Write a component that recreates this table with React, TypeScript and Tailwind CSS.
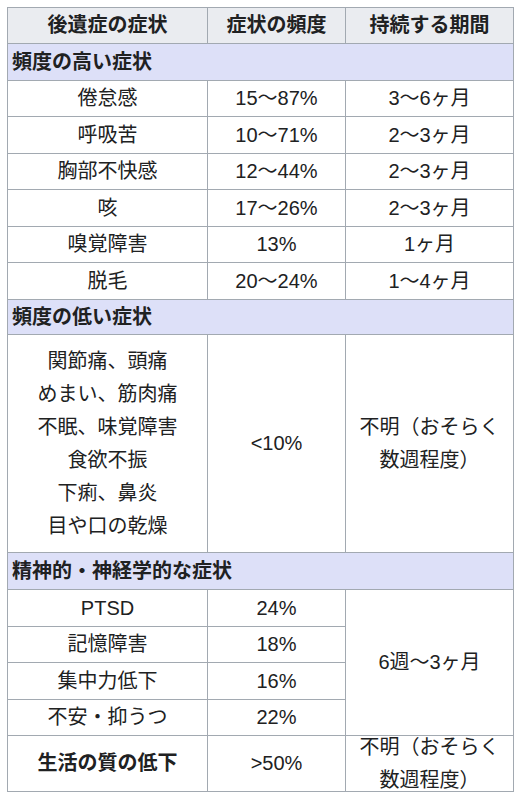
import React from "react";

const font = {
  fontFamily: '"Liberation Sans", "Noto Sans CJK JP", sans-serif',
};

const td = "border border-[#a2a9b1] text-center align-middle p-0";
const sec = "border border-[#a2a9b1] bg-[#dde0f8] text-left font-bold pl-[4px] align-middle";

export default function App() {
  const high: [string, string, string][] = [
    ["倦怠感", "15〜87%", "3〜6ヶ月"],
    ["呼吸苦", "10〜71%", "2〜3ヶ月"],
    ["胸部不快感", "12〜44%", "2〜3ヶ月"],
    ["咳", "17〜26%", "2〜3ヶ月"],
    ["嗅覚障害", "13%", "1ヶ月"],
    ["脱毛", "20〜24%", "1〜4ヶ月"],
  ];
  const heights = ["h-[36px]", "h-[37px]", "h-[36px]", "h-[37px]", "h-[36px]", "h-[37px]"];
  const mental: [string, string][] = [
    ["PTSD", "24%"],
    ["記憶障害", "18%"],
    ["集中力低下", "16%"],
    ["不安・抑うつ", "22%"],
  ];
  const mh = ["h-[37px]", "h-[36px]", "h-[37px]", "h-[36px]"];
  return (
    <div className="bg-white w-[522px] h-[800px] pt-[7px] pl-[7px] text-[#202122]" style={font}>
      <table className="border-collapse w-[506px] table-fixed text-[20px] leading-[33px]">
        <colgroup>
          <col className="w-[200px]" />
          <col className="w-[138px]" />
          <col className="w-[168px]" />
        </colgroup>
        <tbody>
          <tr className="h-[36px] bg-[#eaecf0]">
            <th className={td + " font-bold"}>後遺症の症状</th>
            <th className={td + " font-bold"}>症状の頻度</th>
            <th className={td + " font-bold"}>持続する期間</th>
          </tr>
          <tr className="h-[37px]">
            <th colSpan={3} className={sec}>頻度の高い症状</th>
          </tr>
          {high.map((r, i) => (
            <tr key={r[0]} className={heights[i]}>
              <td className={td}>{r[0]}</td>
              <td className={td}>{r[1]}</td>
              <td className={td}>{r[2]}</td>
            </tr>
          ))}
          <tr className="h-[35px]">
            <th colSpan={3} className={sec}>頻度の低い症状</th>
          </tr>
          <tr className="h-[218px]">
            <td className={td}>
              関節痛、頭痛
              <br />
              めまい、筋肉痛
              <br />
              不眠、味覚障害
              <br />
              食欲不振
              <br />
              下痢、鼻炎
              <br />
              目や口の乾燥
            </td>
            <td className={td}>&lt;10%</td>
            <td className={td}>
              不明（おそらく
              <br />
              数週程度）
            </td>
          </tr>
          <tr className="h-[37px]">
            <th colSpan={3} className={sec}>精神的・神経学的な症状</th>
          </tr>
          {mental.map((r, i) => (
            <tr key={r[0]} className={mh[i]}>
              <td className={td}>{r[0]}</td>
              <td className={td}>{r[1]}</td>
              {i === 0 && (
                <td rowSpan={4} className={td}>
                  6週〜3ヶ月
                </td>
              )}
            </tr>
          ))}
          <tr className="h-[56px]">
            <td className={td + " font-bold"}>生活の質の低下</td>
            <td className={td}>&gt;50%</td>
            <td className={td}>
              <div className="h-[55px] flex flex-col justify-center items-center">
                <span className="block">不明（おそらく</span>
                <span className="block">数週程度）</span>
              </div>
            </td>
          </tr>
        </tbody>
      </table>
    </div>
  );
}
